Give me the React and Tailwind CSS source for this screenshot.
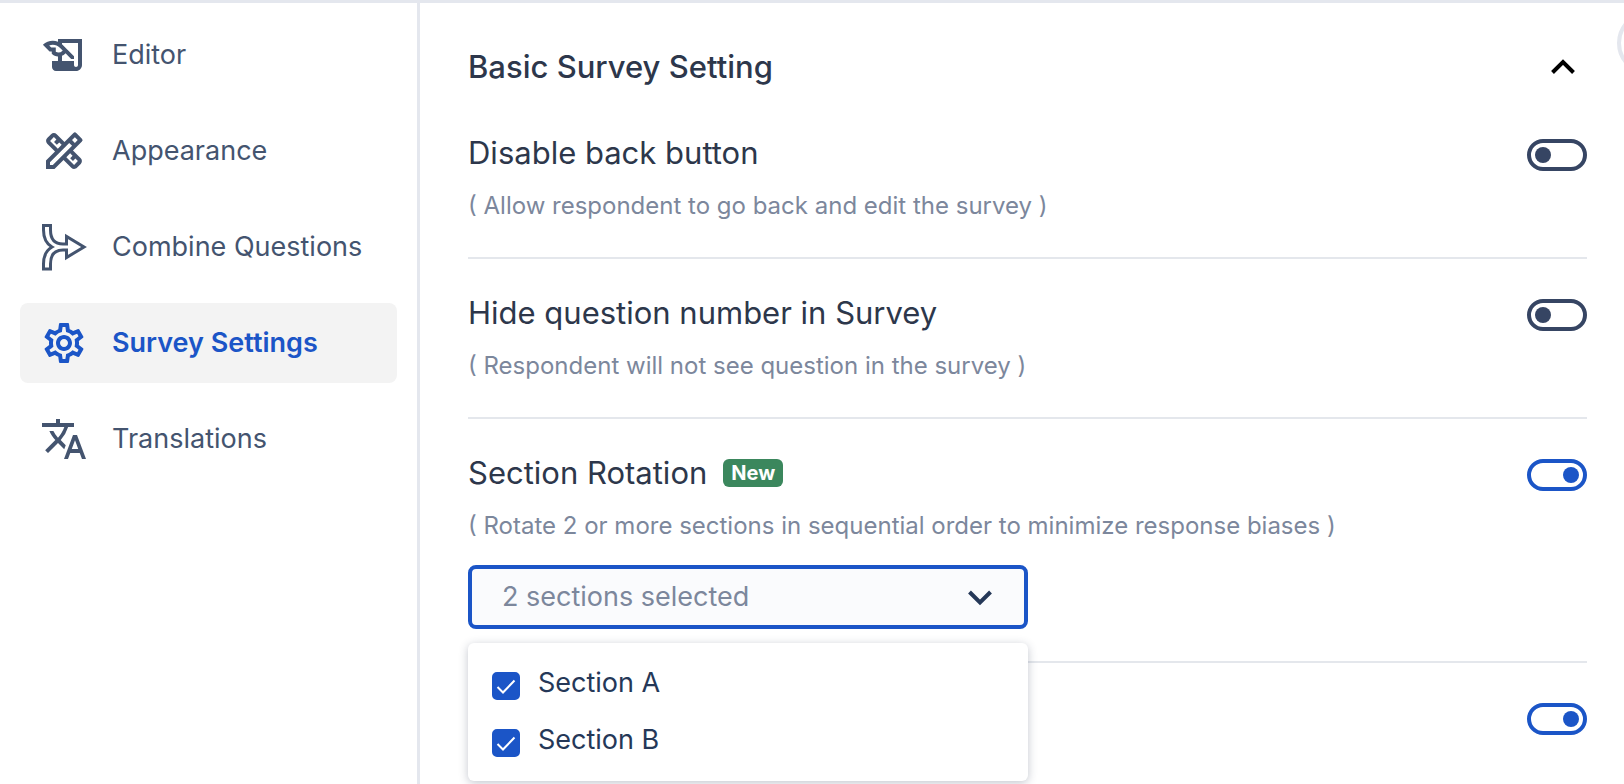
import { useState } from 'react'
import { MdOutlineHistoryEdu, MdOutlineDesignServices, MdOutlineSettings, MdOutlineTranslate } from 'react-icons/md'

function CombineIcon({ className }) {
  return (
    <svg viewBox="0 0 48 48" fill="none" stroke="currentColor" strokeWidth="3" className={className} aria-hidden="true">
      <path d="M3.500 2.500h7v4.500c0 9 4 14 12.500 14h3.500v-7.500l17.500 10.500-17.500 10.500v-7.500h-3.500c-8.500 0-12.500 5-12.500 14v5H3.500v-5c0-8 2.500-13.500 8.500-17-6-3.500-8.500-9-8.500-17z" />
    </svg>
  )
}

const menu = [
  { id: 'editor', label: 'Editor', Icon: MdOutlineHistoryEdu },
  { id: 'appearance', label: 'Appearance', Icon: MdOutlineDesignServices },
  { id: 'combine', label: 'Combine Questions', Icon: CombineIcon },
  { id: 'settings', label: 'Survey Settings', Icon: MdOutlineSettings },
  { id: 'translations', label: 'Translations', Icon: MdOutlineTranslate },
]

function Chevron({ up, className }) {
  return (
    <svg viewBox="0 0 24 24" fill="none" stroke="currentColor" strokeWidth="4" className={className} aria-hidden="true">
      <path d={up ? 'M1.500 17.500 12 7l10.500 10.500' : 'M1.500 7 12 17.500 22.500 7'} />
    </svg>
  )
}

function Sidebar({ active, onSelect }) {
  return (
    <aside className="w-[420px] shrink-0 border-r-[3px] border-[#e4e7ee]">
      <nav className="flex flex-col gap-4 px-5 pt-3">
        {menu.map(({ id, label, Icon }) => (
          <a
            key={id}
            href={`#${id}`}
            onClick={() => onSelect(id)}
            className={`flex items-center gap-6 h-20 px-5 rounded-lg text-[27px] ${
              active === id ? 'bg-[#f3f3f3] text-[#1b55c7] font-semibold' : 'text-[#44546f]'
            }`}
          >
            <Icon className="size-12 shrink-0" />
            {label}
          </a>
        ))}
      </nav>
    </aside>
  )
}

function Toggle({ label, initial = false }) {
  const [on, setOn] = useState(initial)
  return (
    <input
      type="checkbox"
      role="switch"
      aria-label={label}
      checked={on}
      onChange={e => setOn(e.target.checked)}
      className="appearance-none shrink-0 mt-2 flex items-center w-[60px] h-8 px-1 rounded-full border-4 border-[#364563] cursor-pointer before:block before:size-4 before:rounded-full before:bg-[#364563] checked:justify-end checked:border-[#1b55c7] checked:before:bg-[#1b55c7]"
    />
  )
}

function Setting({ title, label, badge, hint, on, children }) {
  return (
    <div className="pt-8 border-b-2 border-[#e4e7ec] last:border-b-0">
      <div className="flex items-start justify-between">
        <div>
          {title && (
            <h3 className="flex items-center gap-4 text-[31px] leading-[44px] text-[#2d374b]">
              {title}
              {badge && (
                <span className="px-2 rounded-md bg-[#3b875d] text-white text-[20px] leading-7 font-bold">{badge}</span>
              )}
            </h3>
          )}
          {hint && <p className="mt-4 text-[24px] leading-[30px] text-[#7c879c]">{hint}</p>}
        </div>
        <Toggle label={label || title} initial={on} />
      </div>
      {children || <div className="h-9" />}
    </div>
  )
}

function SectionPicker() {
  const [open, setOpen] = useState(true)
  const [selected, setSelected] = useState(['Section A', 'Section B'])

  function toggle(name) {
    setSelected(s => (s.includes(name) ? s.filter(n => n !== name) : [...s, name]))
  }

  return (
    <div className="relative mt-6 mb-8 w-[560px] max-w-full">
      <button
        type="button"
        aria-haspopup="true"
        aria-expanded={open}
        onClick={() => setOpen(!open)}
        className="flex items-center justify-between w-full h-16 pl-[30px] pr-8 rounded-lg border-4 border-[#1b55c7] bg-[#fafbfd] text-[27px] text-[#7c879c]"
      >
        {selected.length} sections selected
        <Chevron className="size-6 text-[#253858]" />
      </button>
      {open && (
        <div className="absolute z-10 left-0 right-0 top-full mt-[14px] flex flex-col gap-[17px] px-6 pt-5 pb-[21px] rounded-md bg-white shadow-[0_2px_10px_rgba(40,50,80,0.28)]">
          {['Section A', 'Section B'].map(name => (
            <label key={name} className="flex items-start gap-[18px] text-[27px] leading-10 text-[#253858] cursor-pointer">
              <span className="grid mt-[9px] size-7">
                <input
                  type="checkbox"
                  checked={selected.includes(name)}
                  onChange={() => toggle(name)}
                  className="peer appearance-none col-start-1 row-start-1 size-7 rounded-[5px] border-2 border-[#1b55c7] checked:bg-[#1b55c7]"
                />
                <svg viewBox="0 0 28 28" fill="none" stroke="white" strokeWidth="2" className="col-start-1 row-start-1 size-7 pointer-events-none" aria-hidden="true">
                  <path d="m5.500 15 5.500 5.500L22.500 8.500" />
                </svg>
              </span>
              {name}
            </label>
          ))}
        </div>
      )}
    </div>
  )
}

export default function App() {
  const [active, setActive] = useState('settings')
  const [expanded, setExpanded] = useState(true)

  return (
    <div className="relative flex h-screen overflow-hidden border-t-[3px] border-[#e4e7ee] bg-white font-['Inter',sans-serif]">
      <Sidebar active={active} onSelect={setActive} />

      <main className="flex-1 min-w-0 pl-12 pr-[37px]">
        <button
          type="button"
          aria-expanded={expanded}
          onClick={() => setExpanded(!expanded)}
          className="flex items-center justify-between w-full h-24 pt-8 pr-3"
        >
          <span className="text-[31px] font-medium text-[#2d374b]">Basic Survey Setting</span>
          <Chevron up={expanded} className="size-6 text-black" />
        </button>

        {expanded && (
          <section>
            <Setting title="Disable back button" hint="( Allow respondent to go back and edit the survey )" />
            <Setting title="Hide question number in Survey" hint="( Respondent will not see question in the survey )" />
            <Setting
              title="Section Rotation"
              badge="New"
              hint="( Rotate 2 or more sections in sequential order to minimize response biases )"
              on
            >
              <SectionPicker />
            </Setting>
            <Setting label="Next setting" on />
          </section>
        )}
      </main>

      <button type="button" aria-label="More" className="absolute top-2 -right-[57px] size-16 rounded-full border-4 border-[#e4e7ee] bg-white" />
    </div>
  )
}
